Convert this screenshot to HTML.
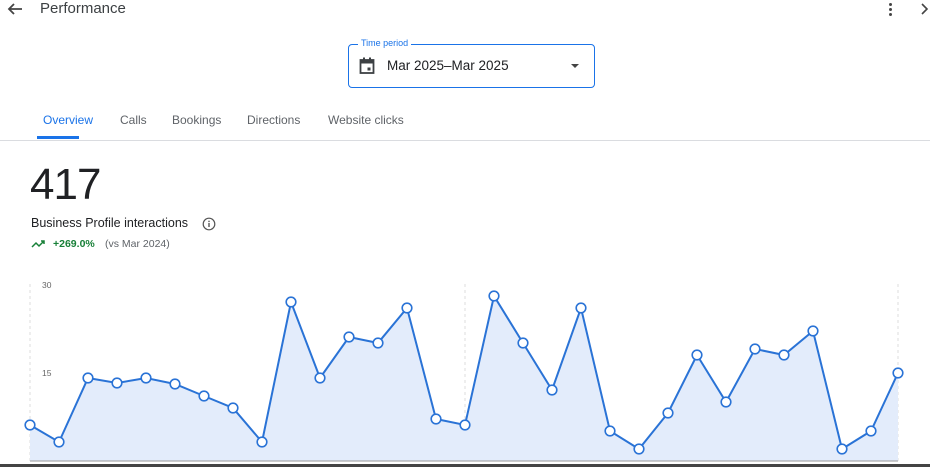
<!DOCTYPE html><html><head><style>
body{margin:0;width:930px;height:467px;overflow:hidden;background:#fff;font-family:"Liberation Sans",sans-serif;position:relative}
.a{position:absolute}
</style></head><body>
<svg class="a" style="left:6px;top:1px" width="18" height="16" viewBox="0 0 18 16"><path d="M16 8H3M8 3L3 8l5 5" stroke="#444" stroke-width="1.8" fill="none"/></svg>
<div class="a" style="left:40px;top:0px;font-size:15px;color:#3c4043">Performance</div>
<div class="a" style="left:889px;top:3px"><div style="width:3px;height:3px;background:#444;border-radius:2px;margin-bottom:2px"></div><div style="width:3px;height:3px;background:#444;border-radius:2px;margin-bottom:2px"></div><div style="width:3px;height:3px;background:#444;border-radius:2px"></div></div>
<svg class="a" style="left:920px;top:3px" width="10" height="12"><path d="M2 1l5 5-5 5" stroke="#444" stroke-width="1.6" fill="none"/></svg>
<div class="a" style="left:348px;top:44px;width:245px;height:42px;border:1px solid #1a73e8;border-radius:4px"></div>
<div class="a" style="left:358px;top:38px;background:#fff;padding:0 3px;font-size:9px;color:#1a73e8">Time period</div>
<svg class="a" style="left:359px;top:57px" width="16" height="18" viewBox="0 0 16 18"><rect x="1.5" y="3" width="13" height="13" fill="none" stroke="#3c4043" stroke-width="1.8"/><rect x="1.5" y="3" width="13" height="3.5" fill="#3c4043"/><rect x="4" y="0.5" width="2" height="3" fill="#3c4043"/><rect x="10" y="0.5" width="2" height="3" fill="#3c4043"/><rect x="8.5" y="10.5" width="3" height="3" fill="#3c4043"/></svg>
<div class="a" style="left:387px;top:58px;font-size:13.5px;color:#202124">Mar 2025–Mar 2025</div>
<div class="a" style="left:571px;top:64px;border-left:4px solid transparent;border-right:4px solid transparent;border-top:4px solid #444"></div>
<div class="a" style="left:43px;top:113px;font-size:12px;color:#1a73e8">Overview</div>
<div class="a" style="top:136px;width:42px;height:3px;background:#1a73e8;left:37px"></div>
<div class="a" style="left:120px;top:113px;font-size:12px;color:#5f6368">Calls</div>
<div class="a" style="left:172px;top:113px;font-size:12px;color:#5f6368">Bookings</div>
<div class="a" style="left:247px;top:113px;font-size:12px;color:#5f6368">Directions</div>
<div class="a" style="left:328px;top:113px;font-size:12px;color:#5f6368">Website clicks</div>
<div class="a" style="left:0;top:140px;width:930px;height:1px;background:#dadce0"></div>
<div class="a" style="left:30px;top:160px;font-size:44px;color:#202124;letter-spacing:-1px">417</div>
<div class="a" style="left:31px;top:216px;font-size:12.5px;color:#202124">Business Profile interactions</div>
<svg class="a" style="left:202px;top:217px" width="14" height="14"><circle cx="7" cy="7" r="5.8" fill="none" stroke="#555" stroke-width="1.2"/><rect x="6.3" y="6" width="1.4" height="4" fill="#555"/><rect x="6.3" y="3.7" width="1.4" height="1.4" fill="#555"/></svg>
<svg class="a" style="left:31px;top:239px" width="16" height="10"><path d="M1 8l4-4 3 3 5-5M10 2h3v3" stroke="#188038" stroke-width="1.5" fill="none"/></svg>
<div class="a" style="left:53px;top:238px;font-size:10.5px;color:#188038;font-weight:bold">+269.0%</div>
<div class="a" style="left:105px;top:238px;font-size:10.5px;color:#5f6368">(vs Mar 2024)</div>
<svg class="a" style="left:0;top:270px" width="930" height="197" viewBox="0 270 930 197">
<line x1="30" y1="284" x2="30" y2="461" stroke="#ddd" stroke-dasharray="3,3"/>
<line x1="465" y1="284" x2="465" y2="461" stroke="#ddd" stroke-dasharray="3,3"/>
<line x1="898" y1="284" x2="898" y2="461" stroke="#ddd" stroke-dasharray="3,3"/>
<text x="42" y="288" font-size="8.5" fill="#666" font-family="Liberation Sans">30</text>
<text x="42" y="376" font-size="8.5" fill="#666" font-family="Liberation Sans">15</text>
<polygon fill="#e3ecfb" points="30,461 30,425 59,442 88,378 117,383 146,378 175,384 204,396 233,408 262,442 291,302 320,378 349,337 378,343 407,308 436,419 465,425 494,296 523,343 552,390 581,308 610,431 639,449 668,413 697,355 726,402 755,349 784,355 813,331 842,449 871,431 898,373 898,461"/>
<polyline fill="none" stroke="#2a73d6" stroke-width="2" points="30,425 59,442 88,378 117,383 146,378 175,384 204,396 233,408 262,442 291,302 320,378 349,337 378,343 407,308 436,419 465,425 494,296 523,343 552,390 581,308 610,431 639,449 668,413 697,355 726,402 755,349 784,355 813,331 842,449 871,431 898,373"/>
<g fill="#fff" stroke="#2a73d6" stroke-width="1.6">
<circle cx="30" cy="425" r="4.8"/><circle cx="59" cy="442" r="4.8"/><circle cx="88" cy="378" r="4.8"/><circle cx="117" cy="383" r="4.8"/><circle cx="146" cy="378" r="4.8"/><circle cx="175" cy="384" r="4.8"/><circle cx="204" cy="396" r="4.8"/><circle cx="233" cy="408" r="4.8"/><circle cx="262" cy="442" r="4.8"/><circle cx="291" cy="302" r="4.8"/><circle cx="320" cy="378" r="4.8"/><circle cx="349" cy="337" r="4.8"/><circle cx="378" cy="343" r="4.8"/><circle cx="407" cy="308" r="4.8"/><circle cx="436" cy="419" r="4.8"/><circle cx="465" cy="425" r="4.8"/><circle cx="494" cy="296" r="4.8"/><circle cx="523" cy="343" r="4.8"/><circle cx="552" cy="390" r="4.8"/><circle cx="581" cy="308" r="4.8"/><circle cx="610" cy="431" r="4.8"/><circle cx="639" cy="449" r="4.8"/><circle cx="668" cy="413" r="4.8"/><circle cx="697" cy="355" r="4.8"/><circle cx="726" cy="402" r="4.8"/><circle cx="755" cy="349" r="4.8"/><circle cx="784" cy="355" r="4.8"/><circle cx="813" cy="331" r="4.8"/><circle cx="842" cy="449" r="4.8"/><circle cx="871" cy="431" r="4.8"/><circle cx="898" cy="373" r="4.8"/>
</g>
<line x1="30" y1="461" x2="898" y2="461" stroke="#999" stroke-width="1"/>
<rect x="0" y="464" width="930" height="3" fill="#444"/>
</svg>
</body></html>
